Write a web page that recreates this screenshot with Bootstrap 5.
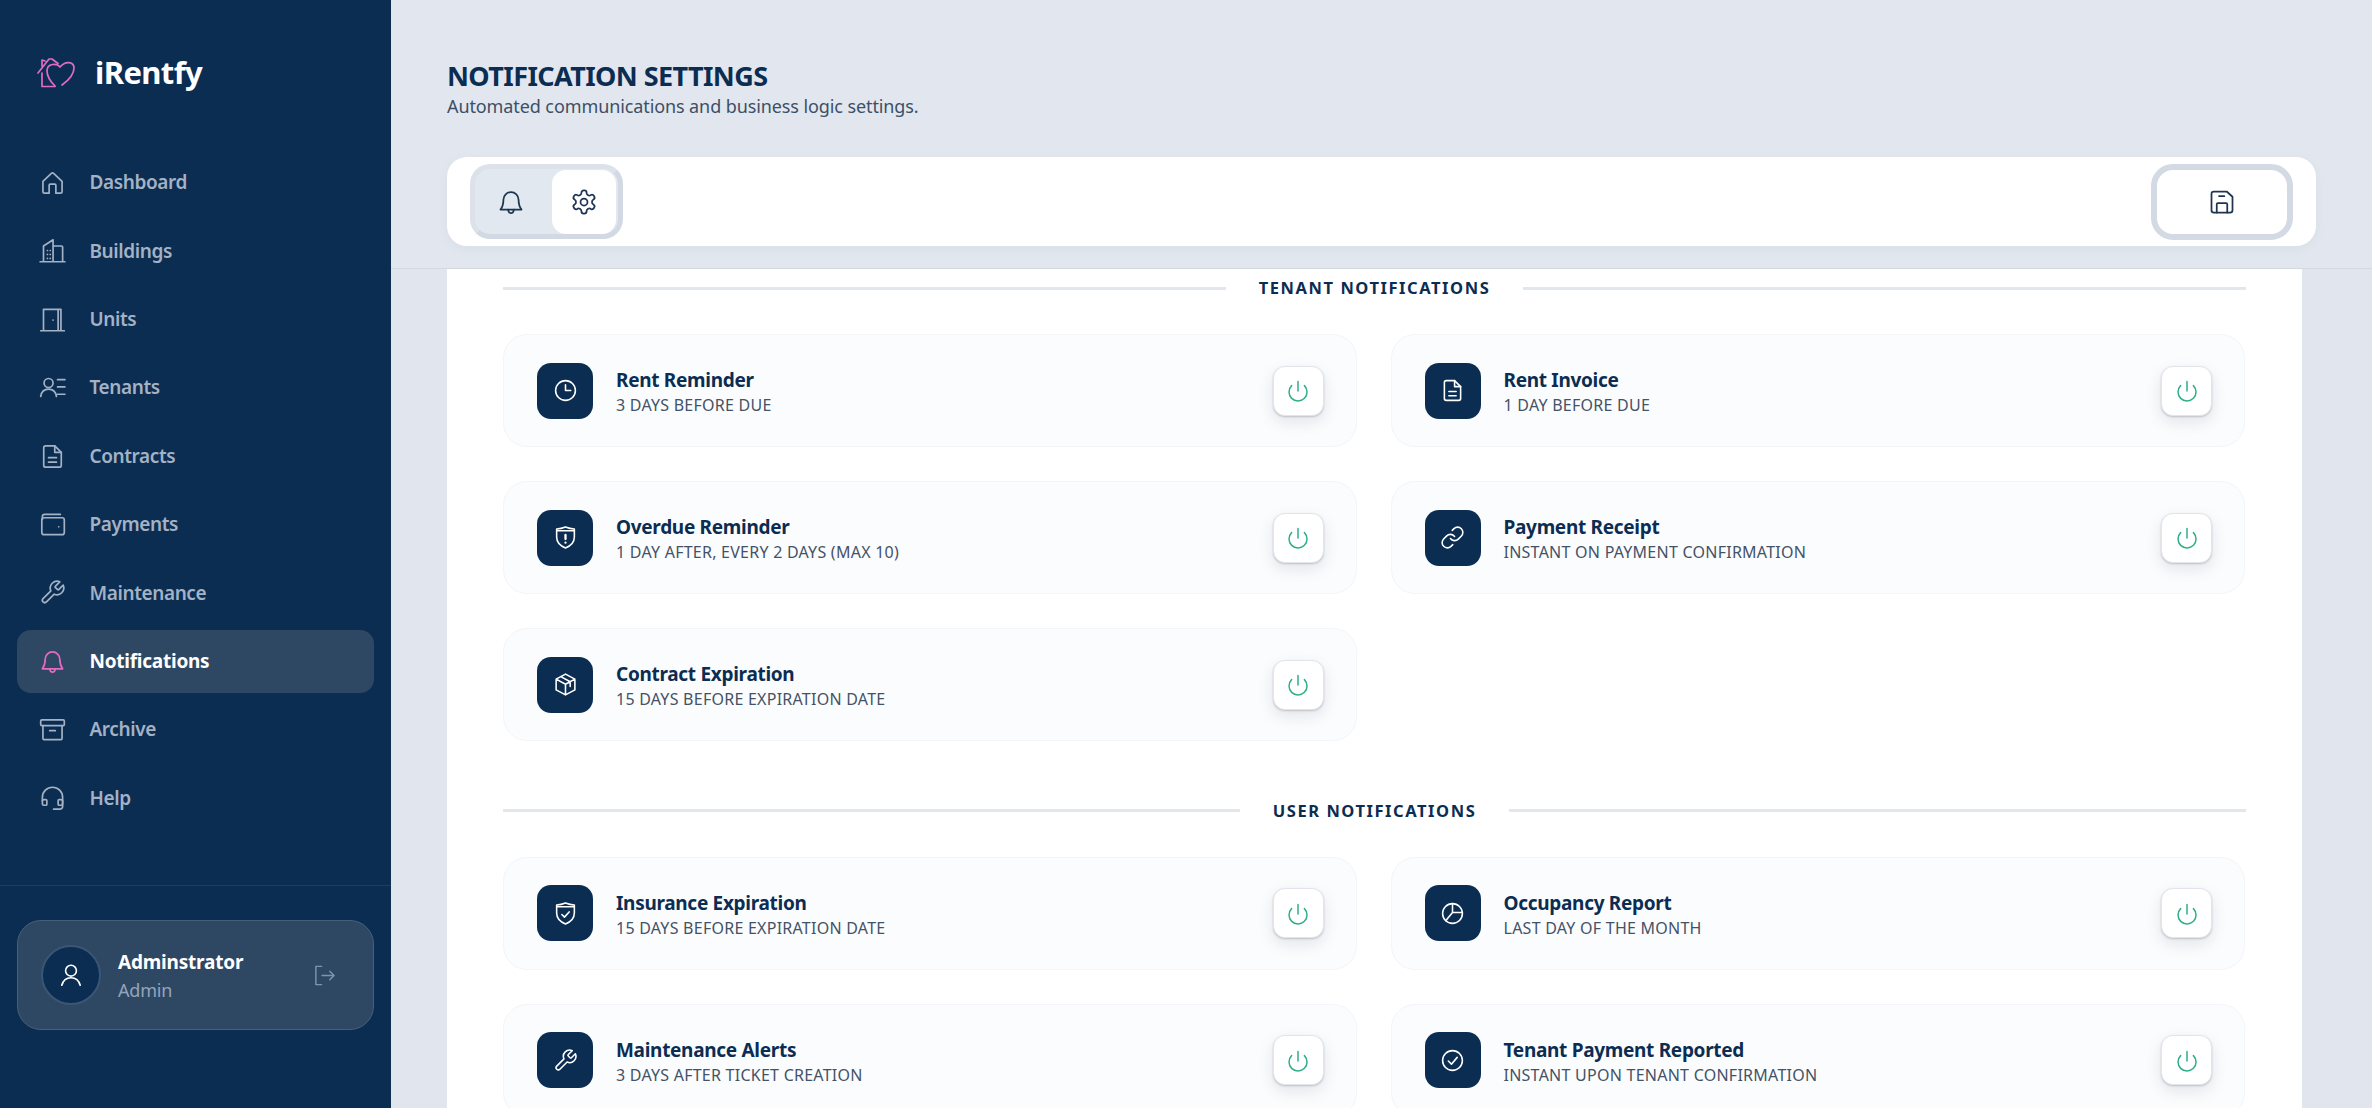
<!DOCTYPE html>
<html lang="en">
<head>
    <meta charset="UTF-8">
    <title>iRentfy - Notification Settings</title>
    <link href="https://cdn.jsdelivr.net/npm/bootstrap@5.3.0/dist/css/bootstrap.min.css" rel="stylesheet">
    <style>
        html, body { height: 100%; }
        body { font-family: "Noto Sans", "Open Sans", sans-serif; background: #e1e6ee; overflow: hidden; color: #0c2d52; }
        svg.ico { fill: none; stroke: currentColor; stroke-width: 1.5; stroke-linecap: round; stroke-linejoin: round; flex-shrink: 0; }
        .side-bar { width: 391px; height: 1108px; background: #0c2d52; flex-shrink: 0; }
        .brand-row { height: 151px; padding: 0 0 6px 36px; }
        .brand-name { font-size: 31px; font-weight: 700; color: #fff; letter-spacing: -0.6px; margin-left: 19px; }
        .side-nav { padding: 0 17px; gap: 5.4px; }
        .side-link { height: 63px; padding-left: 22px; gap: 23.5px; border-radius: 14px; color: #a3b2c5; font-size: 19px; font-weight: 600; letter-spacing: -0.4px; text-decoration: none; }
        .side-link.active-link { background: #2e4864; color: #fff; font-weight: 700; letter-spacing: -0.25px; }
        .side-link.active-link svg { color: #e36bc4; }
        .side-foot { margin-top: auto; border-top: 1px solid #1e3d60; padding: 34px 17px 78px; }
        .user-box { height: 110px; background: #2e4864; border: 1px solid #46607c; border-radius: 24px; padding: 0 37px 0 23px; }
        .user-pic { width: 60px; height: 60px; border-radius: 50%; background: #0c2d52; border: 2px solid #3b5674; color: #fff; flex-shrink: 0; }
        .user-info { margin-left: 17px; }
        .user-name { font-size: 19px; font-weight: 700; color: #fff; line-height: 26px; letter-spacing: -0.2px; }
        .user-role { font-size: 18px; color: #94a5ba; line-height: 24px; letter-spacing: -0.2px; margin-top: 3px; }
        .logout-ico { color: #7f93ab; }
        .main-col { min-width: 0; }
        .top-strip { height: 269px; background: #e2e7ef; border-bottom: 1px solid #d3d9e3; padding: 58px 56px 0; }
        .page-title { font-size: 27px; font-weight: 700; line-height: 36px; color: #0c2d52; margin: 0; letter-spacing: -0.6px; }
        .page-sub { font-size: 18px; line-height: 24px; color: #3d4f66; margin: 0; letter-spacing: -0.1px; }
        .tool-bar { height: 89px; margin-top: 39px; background: #fff; border-radius: 20px; padding: 0 23px; box-shadow: 0 3px 10px rgba(148, 163, 184, .12); }
        .tab-group { height: 75px; width: 153px; background: #e2e8f0; border: 5px solid; border-color: #dde2ea #d3d9e3 #d3d9e3 #dde2ea; border-radius: 20px; gap: 5px; }
        .tab-btn { width: 72px; height: 64px; border: 0; background: transparent; color: #1e3552; border-radius: 14px; padding: 0; }
        .tab-btn.on { background: #fff; width: 63.5px; }
        .save-btn { width: 142px; height: 76px; background: #fff; border: 6px solid #d4dae4; border-radius: 22px; color: #1e3552; padding: 0; }
        .body-panel { margin: 0 70px 0 56px; background: #fff; padding: 5px 56px 0; height: 839px; overflow: hidden; }
        .group-head { gap: 33px; font-size: 16.5px; font-weight: 700; letter-spacing: 1.55px; line-height: 28px; color: #0c2d52; white-space: nowrap; }
        .group-head::before, .group-head::after { content: ""; flex: 1; height: 3px; background: #e2e6ed; }
        .opt-grid { display: grid; grid-template-columns: 853.5px 854.5px; gap: 34px; margin-top: 32px; margin-bottom: 55.5px; }
        .opt-item { height: 113px; background: #fbfcfe; border: 1px solid #f3f5f8; border-radius: 24px; padding: 0 32px 0 33px; gap: 23px; }
        .opt-icon { width: 56px; height: 56px; background: #0c2d52; color: #fff; border-radius: 14px; flex-shrink: 0; }
        .opt-text { padding-top: 2px; }
        .opt-name { font-size: 19px; font-weight: 700; line-height: 26px; color: #0c2d52; letter-spacing: -0.3px; }
        .opt-note { font-size: 16px; line-height: 22px; color: #445266; letter-spacing: 0.25px; text-transform: uppercase; margin-top: 1px; }
        .power-btn { width: 51px; height: 50px; background: #fff; border: 1px solid #e2e6ec; border-radius: 12px; box-shadow: 0 1px 2px rgba(15, 23, 42, .2), 0 6px 16px rgba(15, 23, 42, .1); color: #2fae88; padding: 0; margin-left: auto; flex-shrink: 0; }
    </style>
</head>
<body class="d-flex">
    <svg width="0" height="0" class="position-absolute">
        <symbol id="i-home" viewBox="0 0 24 24"><path d="M3.500 11 11 3.900a1.500 1.500 0 0 1 2 0l7.500 7.100v9a1.500 1.500 0 0 1-1.500 1.500h-4v-7a1 1 0 0 0-1-1h-4a1 1 0 0 0-1 1v7H5a1.500 1.500 0 0 1-1.500-1.500z"/></symbol>
        <symbol id="i-build" viewBox="0 0 24 24"><path d="M1 22h22M4 22V8l8.500-5.500V22M12.500 8H20a1 1 0 0 1 1 1v13M7.500 12h.01M7.500 15.500h.01M7.500 19h.01M10 12h.01M10 15.500h.01M10 19h.01"/></symbol>
        <symbol id="i-door" viewBox="0 0 24 24"><path d="M1.500 22h21M4 22V3h15.500v19M17 3v19M12.500 12.500h.01"/></symbol>
        <symbol id="i-tenants" viewBox="0 0 24 24"><circle cx="8.500" cy="8" r="4"/><path d="M1.500 20c.6-4 3.400-6.500 7-6.500s6.400 2.500 7 6.500M16.500 5H23M16.500 11.500H23M16.500 18H23"/></symbol>
        <symbol id="i-file" viewBox="0 0 24 24"><path d="M14 2.500H6a1.800 1.800 0 0 0-1.800 1.800v15.400A1.800 1.800 0 0 0 6 21.500h12a1.800 1.800 0 0 0 1.800-1.800V8.300z"/><path d="M14 2.500v5.800h5.800M8.500 13h7M8.500 17h7"/></symbol>
        <symbol id="i-wallet" viewBox="0 0 24 24"><path d="M3 7.500V5a2 2 0 0 1 2-2h14"/><rect x="2.500" y="6" width="20" height="15" rx="2"/><path d="M17.500 14h.01"/></symbol>
        <symbol id="i-wrench" viewBox="0 0 24 24"><path d="M14.700 6.300a1 1 0 0 0 0 1.400l1.600 1.600a1 1 0 0 0 1.400 0l3.770-3.770a6 6 0 0 1-7.940 7.940l-6.910 6.910a2.120 2.120 0 0 1-3-3l6.910-6.910a6 6 0 0 1 7.940-7.940l-3.760 3.760z"/></symbol>
        <symbol id="i-bell" viewBox="0 0 24 24"><path d="M5.500 10a6.500 6.500 0 0 1 13 0c0 4.500 1 6.500 2.500 8.500H3c1.500-2 2.500-4 2.500-8.500z"/><path d="M9.500 18.500c.3 2 1.200 3 2.500 3s2.200-1 2.500-3"/></symbol>
        <symbol id="i-archive" viewBox="0 0 24 24"><rect x="1.500" y="3.500" width="21" height="5" rx="1"/><path d="M3.500 8.500V20a1 1 0 0 0 1 1h15a1 1 0 0 0 1-1V8.500M9.500 13h5"/></symbol>
        <symbol id="i-headset" viewBox="0 0 24 24"><path d="M3 14v-3a9 9 0 0 1 18 0v8a2.500 2.500 0 0 1-2.500 2.500H13"/><path d="M3 14.500A1.500 1.500 0 0 1 4.500 13H6a1 1 0 0 1 1 1v3a1 1 0 0 1-1 1H4.500A1.500 1.500 0 0 1 3 16.500zM21 14.500a1.500 1.500 0 0 0-1.500-1.500H18a1 1 0 0 0-1 1v3a1 1 0 0 0 1 1h1.500a1.500 1.500 0 0 0 1.500-1.500z"/></symbol>
        <symbol id="i-user" viewBox="0 0 24 24"><circle cx="12" cy="8" r="5"/><path d="M3.500 21.500c1.200-4.500 4.500-7 8.500-7s7.300 2.500 8.500 7"/></symbol>
        <symbol id="i-logout" viewBox="0 0 24 24"><path d="M9 2.500H3v19h6M9.500 12H22M17.500 7.500l4.500 4.500-4.500 4.500"/></symbol>
        <symbol id="i-gear" viewBox="0 0 24 24"><path d="M12.220 2h-.44a2 2 0 0 0-2 2v.18a2 2 0 0 1-1 1.730l-.43.25a2 2 0 0 1-2 0l-.15-.08a2 2 0 0 0-2.730.73l-.22.38a2 2 0 0 0 .73 2.730l.15.1a2 2 0 0 1 1 1.720v.51a2 2 0 0 1-1 1.740l-.15.09a2 2 0 0 0-.73 2.730l.22.38a2 2 0 0 0 2.730.73l.15-.08a2 2 0 0 1 2 0l.43.25a2 2 0 0 1 1 1.730V20a2 2 0 0 0 2 2h.44a2 2 0 0 0 2-2v-.18a2 2 0 0 1 1-1.730l.43-.25a2 2 0 0 1 2 0l.15.08a2 2 0 0 0 2.730-.73l.22-.39a2 2 0 0 0-.73-2.730l-.15-.08a2 2 0 0 1-1-1.740v-.5a2 2 0 0 1 1-1.740l.15-.09a2 2 0 0 0 .73-2.730l-.22-.38a2 2 0 0 0-2.730-.73l-.15.08a2 2 0 0 1-2 0l-.43-.25a2 2 0 0 1-1-1.730V4a2 2 0 0 0-2-2z"/><circle cx="12" cy="12" r="3"/></symbol>
        <symbol id="i-save" viewBox="0 0 24 24"><path d="M3 5a2 2 0 0 1 2-2h11l5 4.500V19a2 2 0 0 1-2 2H5a2 2 0 0 1-2-2z"/><path d="M7.500 21v-7a1 1 0 0 1 1-1h7a1 1 0 0 1 1 1v7M9.500 7h4.500"/></symbol>
        <symbol id="i-power" viewBox="0 0 24 24"><path d="M12 2.500v9.500M18.400 6.600a9 9 0 1 1-12.770.04"/></symbol>
        <symbol id="i-clock" viewBox="0 0 24 24"><circle cx="12" cy="12" r="9.500"/><path d="M12 6.500V12h5"/></symbol>
        <symbol id="i-shield-alert" viewBox="0 0 24 24"><path d="M12 2c3 1.300 5.500 1.800 8.500 1.800v7.700c0 5-3.500 8.500-8.500 10.500-5-2-8.500-5.500-8.500-10.500V3.800c3 0 5.500-.5 8.500-1.800zM3.500 5.500h17"/><path stroke-width="2.200" d="M12 9.500v4M12 17h.01"/></symbol>
        <symbol id="i-shield-check" viewBox="0 0 24 24"><path d="M12 2c3 1.300 5.500 1.800 8.500 1.800v7.700c0 5-3.500 8.500-8.500 10.500-5-2-8.500-5.500-8.500-10.500V3.800c3 0 5.500-.5 8.500-1.800zM3.500 5.500h17"/><path d="m8.500 13 2.500 2.500 4.500-5"/></symbol>
        <symbol id="i-box" viewBox="0 0 24 24"><path d="M12 2 3 6.800v10.400L12 22l9-4.800V6.800zM3 6.800l9 5 9-5M12 11.800V22M7.500 4.400l9 5V14"/></symbol>
        <symbol id="i-link" viewBox="0 0 24 24"><path d="M10 13a5 5 0 0 0 7.540.54l3-3a5 5 0 0 0-7.070-7.070l-1.720 1.710"/><path d="M14 11a5 5 0 0 0-7.540-.54l-3 3a5 5 0 0 0 7.070 7.070l1.710-1.710"/></symbol>
        <symbol id="i-pie" viewBox="0 0 24 24"><circle cx="12" cy="12" r="9.500"/><path d="M12 2.500V11L5.500 19M12 11h9.500"/></symbol>
        <symbol id="i-check" viewBox="0 0 24 24"><circle cx="12" cy="12" r="9.500"/><path d="m8 12.500 3 3 5.500-6.500"/></symbol>
    </svg>

    <aside class="side-bar d-flex flex-column">
        <div class="brand-row d-flex align-items-center">
            <svg width="40" height="36" viewBox="36 52 40 36" fill="none" stroke="#e36bc4" stroke-width="1.700" stroke-linejoin="round" stroke-linecap="round">
                <path d="M38 70 49 56h3l6 4.500M42 63v-6l3 1M42 70v13.500h13"/>
                <path d="M62 82c7-5 12-11 12-17 0-6-8-8-14-1-3-4-13-4-13 4 0 6 4 11 8 15"/>
            </svg>
            <span class="brand-name">iRentfy</span>
        </div>
        <nav class="side-nav d-flex flex-column" id="sideNav"></nav>
        <div class="side-foot">
            <div class="user-box d-flex align-items-center">
                <div class="user-pic d-flex align-items-center justify-content-center"><svg class="ico" width="26" height="26"><use href="#i-user"/></svg></div>
                <div class="user-info">
                    <div class="user-name">Adminstrator</div>
                    <div class="user-role">Admin</div>
                </div>
                <svg class="ico ms-auto logout-ico" width="23" height="23"><use href="#i-logout"/></svg>
            </div>
        </div>
    </aside>

    <main class="main-col flex-grow-1 d-flex flex-column">
        <header class="top-strip">
            <h1 class="page-title">NOTIFICATION SETTINGS</h1>
            <p class="page-sub">Automated communications and business logic settings.</p>
            <div class="tool-bar d-flex align-items-center justify-content-between">
                <div class="tab-group d-flex align-items-center">
                    <button class="tab-btn" type="button"><svg class="ico" width="28" height="28"><use href="#i-bell"/></svg></button>
                    <button class="tab-btn on" type="button"><svg class="ico" width="28" height="28"><use href="#i-gear"/></svg></button>
                </div>
                <button class="save-btn" type="button"><svg class="ico" width="28" height="28"><use href="#i-save"/></svg></button>
            </div>
        </header>
        <section class="body-panel">
            <div class="group-head d-flex align-items-center">TENANT NOTIFICATIONS</div>
            <div class="opt-grid" id="tenantOpts"></div>
            <div class="group-head d-flex align-items-center">USER NOTIFICATIONS</div>
            <div class="opt-grid" id="userOpts"></div>
        </section>
    </main>

    <script>
        const links = [
            ['Dashboard', 'i-home'], ['Buildings', 'i-build'], ['Units', 'i-door'], ['Tenants', 'i-tenants'], ['Contracts', 'i-file'],
            ['Payments', 'i-wallet'], ['Maintenance', 'i-wrench'], ['Notifications', 'i-bell'], ['Archive', 'i-archive'], ['Help', 'i-headset']
        ];
        document.getElementById('sideNav').innerHTML = links.map(l => `
            <a href="#" class="side-link d-flex align-items-center ${l[0] === 'Notifications' ? 'active-link' : ''}">
                <svg class="ico" width="27" height="27"><use href="#${l[1]}"/></svg><span>${l[0]}</span>
            </a>`).join('');

        function optItem(o) {
            return `<div class="opt-item d-flex align-items-center">
                <div class="opt-icon d-flex align-items-center justify-content-center"><svg class="ico" width="25" height="25"><use href="#${o[2]}"/></svg></div>
                <div class="opt-text"><div class="opt-name">${o[0]}</div><div class="opt-note">${o[1]}</div></div>
                <button class="power-btn" type="button"><svg class="ico" width="24" height="24"><use href="#i-power"/></svg></button>
            </div>`;
        }
        document.getElementById('tenantOpts').innerHTML = [
            ['Rent Reminder', '3 days before due', 'i-clock'],
            ['Rent Invoice', '1 day before due', 'i-file'],
            ['Overdue Reminder', '1 day after, every 2 days (max 10)', 'i-shield-alert'],
            ['Payment Receipt', 'Instant on payment confirmation', 'i-link'],
            ['Contract Expiration', '15 days before expiration date', 'i-box']
        ].map(optItem).join('');
        document.getElementById('userOpts').innerHTML = [
            ['Insurance Expiration', '15 days before expiration date', 'i-shield-check'],
            ['Occupancy Report', 'Last day of the month', 'i-pie'],
            ['Maintenance Alerts', '3 days after ticket creation', 'i-wrench'],
            ['Tenant Payment Reported', 'Instant upon tenant confirmation', 'i-check']
        ].map(optItem).join('');
    </script>
    <script src="https://cdn.jsdelivr.net/npm/bootstrap@5.3.0/dist/js/bootstrap.bundle.min.js"></script>
</body>
</html>
